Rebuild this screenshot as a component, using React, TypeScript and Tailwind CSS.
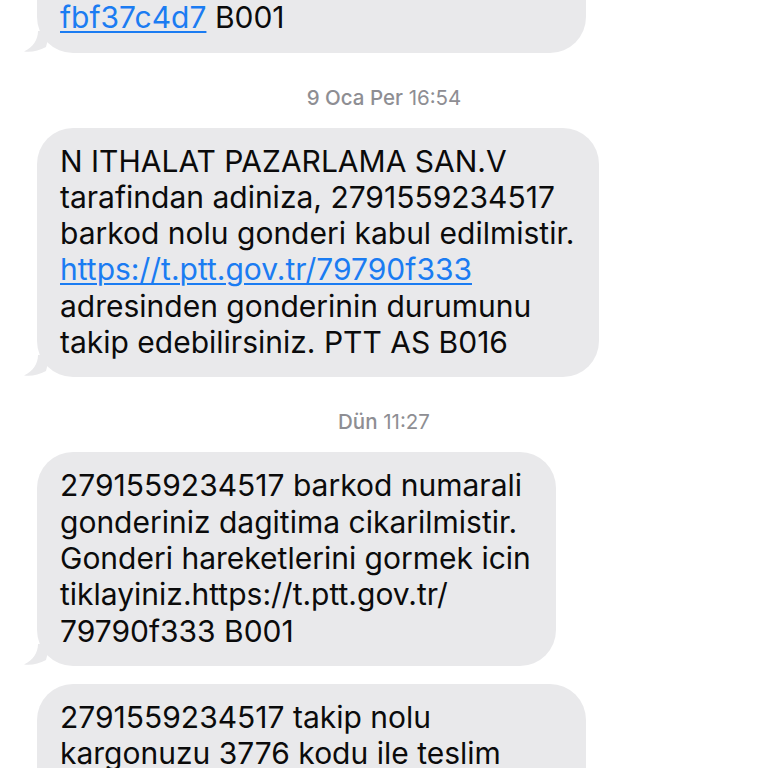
const Tail = () => (
  <svg className="absolute -left-[13px] bottom-0" width="26" height="22" viewBox="0 0 26 22">
    <path d="M14 0 C14 9 9 16 0 20.5 C7 21.5 15 20 22 16 L26 0 Z" fill="#e9e9eb" />
  </svg>
);

type Part = { text: string; link?: boolean };

const Bubble = ({ lines, width, tail = true }: { lines: Part[][]; width: string; tail?: boolean }) => (
  <div className={`relative ml-[37px] ${width} rounded-[36px] bg-[#e9e9eb] pl-[23px] pt-[15px] pb-[17px]`}>
    {lines.map((line, i) => (
      <div key={i} className="whitespace-nowrap leading-[36.3px]">
        {line.map((p, j) =>
          p.link ? (
            <span key={j} className="text-[#1b7cf2] underline decoration-[1.5px] underline-offset-[3px]">
              {p.text}
            </span>
          ) : (
            <span key={j}>{p.text}</span>
          )
        )}
      </div>
    ))}
    {tail && <Tail />}
  </div>
);

const Stamp = ({ day, time }: { day: string; time: string }) => (
  <div className="mt-[33px] mb-[18px] text-center text-[20.5px] leading-[24px] text-[#8e8e93]">
    <span className="font-medium">{day}</span> {time}
  </div>
);

export default function App() {
  return (
    <div className="h-[768px] w-[768px] overflow-hidden bg-white font-['Inter','Noto_Sans',sans-serif] text-[30px] text-[#0b0b0b]">
      <div className="-mt-[52px]">
        <Bubble
          width="w-[549px]"
          lines={[
            [{ text: "https://t.ptt.gov.tr/", link: true }],
            [{ text: "fbf37c4d7", link: true }, { text: " B001" }],
          ]}
        />
      </div>
      <Stamp day="9 Oca Per" time="16:54" />
      <Bubble
        width="w-[562px]"
        lines={[
          [{ text: "N ITHALAT PAZARLAMA SAN.V" }],
          [{ text: "tarafindan adiniza, 2791559234517" }],
          [{ text: "barkod nolu gonderi kabul edilmistir." }],
          [{ text: "https://t.ptt.gov.tr/79790f333", link: true }],
          [{ text: "adresinden gonderinin durumunu" }],
          [{ text: "takip edebilirsiniz. PTT AS B016" }],
        ]}
      />
      <Stamp day="Dün" time="11:27" />
      <Bubble
        width="w-[519px]"
        lines={[
          [{ text: "2791559234517 barkod numarali" }],
          [{ text: "gonderiniz dagitima cikarilmistir." }],
          [{ text: "Gonderi hareketlerini gormek icin" }],
          [{ text: "tiklayiniz.https://t.ptt.gov.tr/" }],
          [{ text: "79790f333 B001" }],
        ]}
      />
      <div className="mt-[18px]">
        <Bubble
          width="w-[549px]"
          tail={false}
          lines={[
            [{ text: "2791559234517 takip nolu" }],
            [{ text: "kargonuzu 3776 kodu ile teslim" }],
            [{ text: "alabilirsiniz." }],
          ]}
        />
      </div>
    </div>
  );
}
